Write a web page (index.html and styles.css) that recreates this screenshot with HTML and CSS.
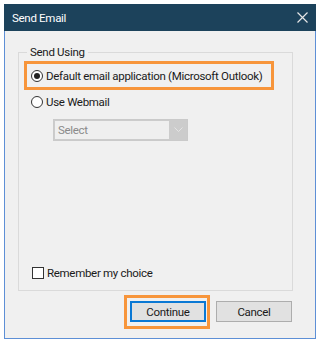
FILE: index.html
```html
<!DOCTYPE html>
<html lang="en">
<head>
  <meta charset="UTF-8" />
  <title>Send Email</title>
  <link rel="stylesheet" href="styles.css">
</head>
<body>

  <!-- Dialog window -->
  <div class="window">
    <div class="titlebar">
      <span class="title">Send Email</span>
      <svg class="close" width="11" height="11" viewBox="0 0 11 11">
        <path d="M0.5 0.5 L10.5 10.5 M10.5 0.5 L0.5 10.5" stroke="#e6e6e6" stroke-width="1.2" fill="none"/>
      </svg>
    </div>

    <div class="content">
      <fieldset class="group">
        <legend>Send Using</legend>

        <div class="highlight option-main">
          <label class="option">
            <span class="radio checked"></span>
            Default email application (Microsoft Outlook)
          </label>
        </div>

        <label class="option option-web">
          <span class="radio"></span>
          Use Webmail
        </label>

        <div class="select">
          <span class="select-text">Select</span>
          <span class="select-arrow">
            <svg width="9" height="6" viewBox="0 0 9 6">
              <path d="M0.5 0.5 L4.5 4.5 L8.5 0.5" stroke="#e4e4e4" stroke-width="1" fill="none"/>
            </svg>
          </span>
        </div>

        <label class="option remember">
          <span class="checkbox"></span>
          Remember my choice
        </label>
      </fieldset>

      <div class="actions">
        <div class="highlight btn-wrap">
          <button class="btn btn-default">Continue</button>
        </div>
        <button class="btn">Cancel</button>
      </div>
    </div>
  </div>

</body>
</html>
```

FILE: styles.css
```css
* { margin: 0; padding: 0; box-sizing: border-box; }

body {
  background: white;
  font-family: Roboto, 'Liberation Sans', sans-serif;
  font-size: 11.5px;
  letter-spacing: -0.3px;
  color: #1a1a1a;
}

.window {
  margin: 4px;
  width: 312px;
  height: 335px;
  background: #f0f0f0;
  border: 1px solid #5d8fd6;
  border-top: none;
  display: flex;
  flex-direction: column;
}

.titlebar {
  height: 27px;
  background: #1c425b;
  color: white;
  display: flex;
  align-items: center;
  justify-content: space-between;
  padding: 0 8px 0 8px;
  margin: 0 -1px;
}

.title {
  font-size: 11.5px;
}

.content {
  flex: 1;
  padding: 14px 0 0 13px;
}

.group {
  width: 275px;
  height: 246px;
  border: 1px solid #dadada;
  padding: 0 5px;
  display: flex;
  flex-direction: column;
}

.group legend {
  margin-left: 3px;
  padding: 0 3px;
  line-height: 14px;
}

.highlight {
  border: 3px solid #f7953b;
}

.option-main {
  width: 250px;
  height: 29px;
  margin-top: 2px;
  display: flex;
  align-items: center;
  padding-left: 4px;
}

.option {
  display: flex;
  align-items: center;
  gap: 3px;
  line-height: 16px;
  white-space: nowrap;
}

.option-web {
  margin-top: 4px;
  padding-left: 7px;
}

.radio {
  width: 12px;
  height: 12px;
  border: 1px solid #333;
  border-radius: 50%;
  background: white;
  display: flex;
  align-items: center;
  justify-content: center;
}

.radio.checked::after {
  content: '';
  width: 6px;
  height: 6px;
  border-radius: 50%;
  background: #222;
}

.select {
  margin: 9px 0 0 29px;
  width: 135px;
  height: 22px;
  border: 1px solid #cacaca;
  background: #cccccc;
  display: flex;
}

.select-text {
  flex: 1;
  margin: 1px 0 1px 1px;
  background: #efefef;
  color: #8a8a8a;
  padding-left: 3px;
  line-height: 18px;
}

.select-arrow {
  width: 18px;
  display: flex;
  align-items: center;
  justify-content: center;
}

.remember {
  margin-top: auto;
  margin-bottom: 9px;
  padding-left: 8px;
}

.checkbox {
  width: 12px;
  height: 12px;
  border: 1px solid #333;
  background: white;
}

.actions {
  display: flex;
  align-items: flex-start;
  gap: 6px;
  margin-top: 4px;
  padding-left: 106px;
}

.btn-wrap {
  padding: 3px 1px 4px 3px;
}

.btn {
  width: 76px;
  height: 21px;
  font-family: inherit;
  font-size: 11.5px;
  letter-spacing: -0.3px;
  color: #1a1a1a;
  background: #e1e1e1;
  border: 1px solid #adadad;
}

.actions > .btn {
  margin-top: 6px;
}

.btn-default {
  border: 2px solid #0a78d4;
}
```
